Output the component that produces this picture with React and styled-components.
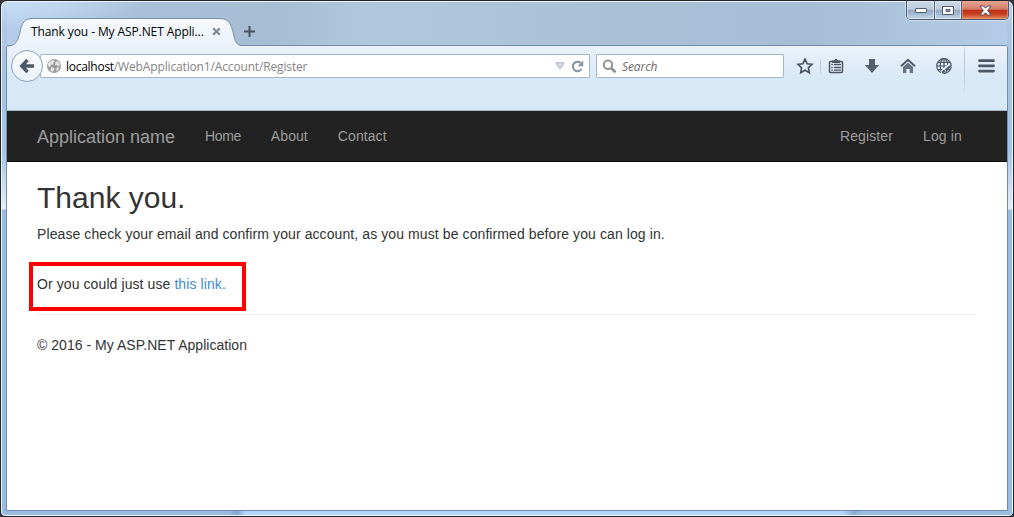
import React from "react";
import styled, { createGlobalStyle } from "styled-components";

const GlobalStyle = createGlobalStyle`
  * { box-sizing: border-box; }
  html, body { margin: 0; padding: 0; overflow: hidden; background: #33363b; }
`;

const WindowFrame = styled.div`
  width: 1014px;
  height: 517px;
  display: flex;
  flex-direction: column;
  position: relative;
  border: 1px solid #20242b;
  border-radius: 7px 7px 5px 5px;
  box-shadow: inset 0 0 0 1px #eef6fd;
  padding: 0 5px 5px;
  overflow: hidden;
  background:
    linear-gradient(90deg, #9bbbdf 0, #9bbbdf 228px, #7fa6d0 236px, #b3d6fb 244px, #b3d6fb 842px, #88aed6 853px, #9bbbdf 862px) 0 100% / 100% 6px no-repeat,
    linear-gradient(180deg, transparent 0, #a9c4e1 60px, #a5c4e6 150px, #e6eef8 208px, #9bbbe0 209px, #9bbbe0 100%) 0 0 / 6px 100% no-repeat,
    linear-gradient(180deg, transparent 0, #a9c4e1 60px, #a5c4e6 150px, #e6eef8 208px, #9bbbe0 209px, #9bbbe0 100%) 100% 0 / 6px 100% no-repeat,
    radial-gradient(ellipse 130px 30px at 10px 0, #c7def6 0, transparent 100%),
    linear-gradient(90deg, #b4cde9 0, #a9bfd7 15%, #a7bdd4 27%, #b0c7de 36%, #aac0d7 62%, #a6bdd5 80%, #b4cce6 100%);
`;

const TabStrip = styled.div`
  height: 44px;
  flex: none;
  display: flex;
  align-items: flex-end;
  position: relative;
  z-index: 1;
`;

const Tab = styled.div`
  width: 233px;
  height: 29px;
  margin-bottom: -1px;
  display: flex;
  align-items: center;
  position: relative;
  padding: 0 15px 0 25px;
`;

const TabShape = styled.svg`
  position: absolute;
  left: 0;
  top: 0;
`;

const TabTitle = styled.span`
  position: relative;
  font: 12px/16px "Open Sans", "Noto Sans", sans-serif;
  letter-spacing: -0.1px;
  color: #000;
  white-space: nowrap;
  width: 174px;
`;

const TabClose = styled.svg`
  position: relative;
  margin-left: 7px;
  flex: none;
`;

const NewTab = styled.svg`
  margin: 0 0 8px 5px;
`;

const WindowControls = styled.div`
  position: absolute;
  right: 4px;
  top: 0;
  z-index: 2;
  height: 19px;
  width: 103px;
  display: flex;
  border: 1px solid #4c5669;
  border-top: 0;
  border-radius: 0 0 5px 5px;
  box-shadow: 0 0 0 1px #dbe8f5aa;
  overflow: hidden;
`;

const ControlButton = styled.div`
  width: ${(p) => p.$width}px;
  display: flex;
  align-items: center;
  justify-content: center;
  border-right: ${(p) => (p.$close ? "0" : "1px solid #586478")};
  box-shadow: inset 0 0 0 1px ${(p) => (p.$close ? "#efa18a99" : "#e4edf8aa")};
  background: ${(p) =>
    p.$close
      ? "linear-gradient(180deg, #e5a695 0, #d77b67 46%, #b93218 50%, #c93c1e 72%, #e39063 100%)"
      : "linear-gradient(180deg, #cbd8e7 0, #bccbdc 46%, #95a9c2 50%, #a8bdd4 75%, #c8d9e9 100%)"};
`;

const Client = styled.div`
  flex: 1;
  min-height: 0;
  display: flex;
  flex-direction: column;
  border: 1px solid #718da9;
  border-radius: 3px 3px 0 0;
  background: #fff;
  overflow: hidden;
`;

const Toolbar = styled.div`
  height: 65px;
  flex: none;
  display: flex;
  align-items: flex-start;
  position: relative;
  padding: 8px 0 0 4px;
  border-bottom: 1px solid #9db7cb;
  background: linear-gradient(180deg, #ebf2fb 0, #dfebf8 22px, #d8e8f7 36px, #d9e9f8 100%);
`;

const BackButton = styled.div`
  width: 32px;
  height: 32px;
  margin-top: -4px;
  flex: none;
  border: 1px solid #8da3bb;
  border-radius: 50%;
  background: linear-gradient(180deg, #fbfdff, #e9f1fa);
  display: flex;
  align-items: center;
  justify-content: center;
  position: relative;
  z-index: 1;
`;

const Field = styled.div`
  height: 24px;
  width: ${(p) => p.$width}px;
  margin-left: ${(p) => p.$offset}px;
  flex: none;
  display: flex;
  align-items: center;
  border: 1px solid #a3b7cc;
  border-radius: 1px;
  background: #fff;
  padding: 0 5px 0 ${(p) => p.$inset}px;
`;

const Address = styled.span`
  flex: 1;
  margin: 2px 0 0 5px;
  font: 12px/16px "Open Sans", "Noto Sans", sans-serif;
  letter-spacing: -0.15px;
  color: #858585;
  white-space: nowrap;
`;

const Host = styled.span`
  color: #000;
  letter-spacing: -0.27px;
`;

const Placeholder = styled.span`
  margin: 2px 0 0 5px;
  font: italic 12px/16px "Open Sans", "Noto Sans", sans-serif;
  letter-spacing: -0.1px;
  color: #6b6b6b;
`;

const ToolIcons = styled.div`
  display: flex;
  align-items: center;
  height: 24px;
  margin-left: 12px;
`;

const ToolIcon = styled.svg`
  flex: none;
  margin-left: ${(p) => p.$gap || 0}px;
`;

const Divider = styled.div`
  width: 1px;
  height: ${(p) => p.$height}px;
  margin-left: ${(p) => p.$gap}px;
  flex: none;
  background: linear-gradient(180deg, #b9cadb22, #b5c7d9 35%, #b5c7d9 65%, #b9cadb22);
`;

const Navbar = styled.nav`
  height: 51px;
  flex: none;
  display: flex;
  align-items: center;
  background: #222;
  border-bottom: 1px solid #080808;
  padding: 0 30px 0 15px;
  font-family: "Liberation Sans", Arial, sans-serif;
`;

const Brand = styled.a`
  font-size: 18px;
  line-height: 20px;
  padding: 1px 15px 0;
  color: #9d9d9d;
`;

const NavLink = styled.a`
  font-size: 14px;
  line-height: 20px;
  padding: 0 15px;
  letter-spacing: ${(p) => p.$tracking || 0}px;
  color: #9d9d9d;
`;

const NavGroup = styled.div`
  display: flex;
  margin-left: ${(p) => (p.$right ? "auto" : "0")};
`;

const Page = styled.main`
  padding: 19px 31px 0 30px;
  font: 14px/20px "Liberation Sans", Arial, sans-serif;
  color: #333;
`;

const Heading = styled.h2`
  margin: 0 0 10px;
  font-size: 30px;
  font-weight: 400;
  line-height: 33px;
`;

const Text = styled.p`
  margin: 0;
  letter-spacing: 0.094px;
`;

const Callout = styled.div`
  width: 217px;
  height: 49px;
  margin: 18px 0 3px -8px;
  border: 4px solid #fe0000;
  padding: 8px 0 0 4px;
  letter-spacing: 0.09px;
  white-space: nowrap;
`;

const Link = styled.a`
  color: #428bca;
`;

const Footer = styled.footer`
  border-top: 1px solid #eee;
  padding-top: 20px;
  letter-spacing: 0.03px;
`;

export default function App() {
  return (
    <>
      <GlobalStyle />
      <WindowFrame>
        <WindowControls>
          <ControlButton $width={28}>
            <svg width="14" height="8" viewBox="0 0 14 8"><rect x="1.5" y="2.5" width="11" height="4" rx="0.5" fill="#fff" stroke="#535b70" /></svg>
          </ControlButton>
          <ControlButton $width={27}>
            <svg width="13" height="11" viewBox="0 0 13 11"><path fillRule="evenodd" d="M.5 1.5h11v8H.5zM4 4.5v2h4v-2z" fill="#fff" stroke="#535b70" /></svg>
          </ControlButton>
          <ControlButton $width={46} $close>
            <svg width="13" height="11" viewBox="0 0 13 11"><path d="M1 1h3.5L6.5 3.2 8.5 1H12L8.6 5.5 12 10H8.5L6.5 7.8 4.5 10H1l3.4-4.5z" fill="#fff" stroke="#58546a" /></svg>
          </ControlButton>
        </WindowControls>

        <TabStrip>
          <Tab>
            <TabShape width="236" height="30" viewBox="0 0 236 30">
              <defs>
                <linearGradient id="tabFill" x1="0" x2="0" y1="0" y2="1">
                  <stop offset="0" stopColor="#f6f9fd" />
                  <stop offset="1" stopColor="#ebf2fb" />
                </linearGradient>
              </defs>
              <path d="M1 30V29C10 29 12 24 14 15C16 6 18 1.5 27 1.5H213C222 1.5 225 6 227 15C229 24 230 28.5 236 29V30Z" fill="url(#tabFill)" />
              <path d="M1 29C10 29 12 24 14 15C16 6 18 1.5 27 1.5H213C222 1.5 225 6 227 15C229 24 230 28.5 236 28.5" fill="none" stroke="#7790aa" />
            </TabShape>
            <TabTitle>Thank you - My ASP.NET Appli...</TabTitle>
            <TabClose width="9" height="9" viewBox="0 0 9 9"><path d="M1.2 1.2l6.6 6.6M7.8 1.2L1.2 7.8" stroke="#858d97" strokeWidth="2.3" /></TabClose>
          </Tab>
          <NewTab width="11" height="11" viewBox="0 0 11 11"><path d="M5.5 0v11M0 5.5h11" stroke="#46535f" strokeWidth="2" /></NewTab>
        </TabStrip>

        <Client>
          <Toolbar>
            <BackButton>
              <svg width="16" height="16" viewBox="0 0 16 16"><path d="M8.5 2L2.8 8l5.7 6M3 8h12" fill="none" stroke="#4b5966" strokeWidth="3.4" /></svg>
            </BackButton>
            <Field $width={550} $offset={-3} $inset={6}>
              <svg width="14" height="14" viewBox="0 0 14 14">
                <circle cx="7" cy="7" r="7" fill="#9b9b9b" />
                <path d="M1 4.5L4 1.6l3-.4 1 1.5-2 1 .5 1.5-2.2.6L3 8 1 7zM8.5 3.2l2-1.3 2 2.4.5 2.5-2 .3-1.4-1.3-1.7.3zM4.2 8l3 1 .2 2-2.2 2-1.6-1.5zM9.7 8.5l2.4-.3-1.2 3.4-1.8.6z" fill="#e5e5e5" />
              </svg>
              <Address><Host>localhost</Host>/WebApplication1/Account/Register</Address>
              <svg width="10" height="8" viewBox="0 0 10 8"><path d="M.8.8h8.4L5 7z" fill="#d8dfe7" stroke="#a8b3c0" /></svg>
              <ToolIcon $gap={6} width="13" height="13" viewBox="0 0 13 13"><path d="M10.4 9.2A4.7 4.7 0 1 1 9.7 3" fill="none" stroke="#8592a2" strokeWidth="2" /><path d="M12.2.6v5.6H6.6z" fill="#8592a2" /></ToolIcon>
            </Field>
            <Field $width={188} $offset={6} $inset={5}>
              <svg width="15" height="15" viewBox="0 0 15 15"><circle cx="6" cy="5.7" r="4.2" fill="none" stroke="#929292" strokeWidth="2" /><path d="M9.2 9l4.3 4.3" stroke="#929292" strokeWidth="2.8" /></svg>
              <Placeholder>Search</Placeholder>
            </Field>
            <ToolIcons>
              <ToolIcon width="18" height="18" viewBox="0 0 18 18"><path d="M9 2.2l2.1 4.5 4.9.6-3.6 3.4.9 4.9L9 13.2l-4.3 2.4.9-4.9L2 7.3l4.9-.6z" fill="none" stroke="#444f5b" strokeWidth="1.6" /></ToolIcon>
              <Divider $height={18} $gap={6} />
              <ToolIcon $gap={7} width="16" height="16" viewBox="0 0 16 16"><path d="M2.5 3.500h11a1 1 0 0 1 1 1v9a1 1 0 0 1-1 1h-11a1 1 0 0 1-1-1v-9a1 1 0 0 1 1-1z" fill="#e8f0f8" stroke="#4a5663" strokeWidth="1.500" /><path d="M4 5V2.500h2L7.300 1h1.400L10 2.500h2V5z" fill="#4a5663" /><path d="M3.300 6.500h1.500M6 6.500h7M3.300 9.500h1.500M6 9.500h7M3.300 12.200h1.500M6 12.200h7" stroke="#4a5663" strokeWidth="1.300" /></ToolIcon>
              <ToolIcon $gap={20} width="16" height="16" viewBox="0 0 16 16"><path d="M5 1h6v6h4l-7 8-7-8h4z" fill="#53616e" /></ToolIcon>
              <ToolIcon $gap={20} width="16" height="16" viewBox="0 0 16 16"><path d="M1 8.200L8 1.800l7 6.400" fill="none" stroke="#4b5764" strokeWidth="1.900" /><path d="M3 9l5-4.500L13 9v6H9.700v-4H6.300v4H3z" fill="#66737f" /></ToolIcon>
              <ToolIcon $gap={19} width="18" height="18" viewBox="0 0 18 18">
                <g fill="none" stroke="#4b5764" strokeWidth="1.200"><circle cx="9" cy="9" r="7.300" /><ellipse cx="9" cy="9" rx="3.800" ry="7.300" /><path d="M9 1.500v15M2 9h14M3 5.300h12M3 12.700h12" /></g>
                <path d="M5.500 17l1-4L14 6.500l3 3-7.500 6.500z" fill="#e2edf8" /><path d="M10 12.300l5.300-4.300 1.200 1.400-5 4.800zM7 15.800c0-2 .9-2.900 2.200-2.700l1.300 1.500c-.7 1.300-2 1.600-3.500 1.200z" fill="#4b5764" />
              </ToolIcon>
              <Divider $height={56} $gap={11} />
              <ToolIcon $gap={13} width="17" height="14" viewBox="0 0 17 14"><path d="M1.500 1.700h14M1.500 6.900h14M1.500 12.100h14" stroke="#4c5763" strokeWidth="2.800" strokeLinecap="round" /></ToolIcon>
            </ToolIcons>
          </Toolbar>

          <Navbar>
            <Brand>Application name</Brand>
            <NavGroup>
              <NavLink $tracking={-0.4}>Home</NavLink>
              <NavLink $tracking={0.08}>About</NavLink>
              <NavLink $tracking={0.08}>Contact</NavLink>
            </NavGroup>
            <NavGroup $right>
              <NavLink $tracking={0.1}>Register</NavLink>
              <NavLink $tracking={0.15}>Log in</NavLink>
            </NavGroup>
          </Navbar>

          <Page>
            <Heading>Thank you.</Heading>
            <Text>Please check your email and confirm your account, as you must be confirmed before you can log in.</Text>
            <Callout>Or you could just use <Link>this link.</Link></Callout>
            <Footer>© 2016 - My ASP.NET Application</Footer>
          </Page>
        </Client>
      </WindowFrame>
    </>
  );
}
